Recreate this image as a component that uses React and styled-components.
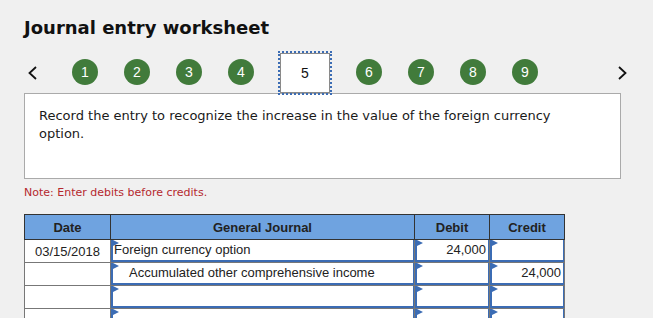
import React from "react";
import styled, { createGlobalStyle } from "styled-components";

const GlobalStyle = createGlobalStyle`
  html, body {
    margin: 0;
    padding: 0;
    background: #f0f0f0;
  }
  body {
    font-family: "DejaVu Sans", Verdana, sans-serif;
  }
`;

const Page = styled.div`
  padding: 17px 0 0 24px;
  width: 653px;
  height: 318px;
  box-sizing: border-box;
  overflow: hidden;
`;

const Title = styled.h1`
  margin: 0;
  font-size: 18px;
  line-height: 22px;
  font-weight: bold;
  color: #111;
`;

const Nav = styled.div`
  display: flex;
  align-items: center;
  height: 40px;
  margin-top: 14px;
`;

const Arrow = styled.button`
  display: flex;
  align-items: center;
  justify-content: center;
  width: 10px;
  height: 14px;
  padding: 0;
  border: none;
  background: none;
  margin: ${(p) => (p.$next ? "0 0 0 79px" : "0 34px 0 4px")};
`;

const Steps = styled.div`
  display: flex;
  align-items: center;
  gap: 26px;
`;

const Step = styled.div`
  width: 26px;
  height: 26px;
  border-radius: 50%;
  background: #417b3b;
  color: #fff;
  display: flex;
  align-items: center;
  justify-content: center;
  font-family: "Liberation Sans", Arial, sans-serif;
  font-size: 14px;
  margin-top: -2px;
`;

const CurrentStep = styled.div`
  position: relative;
  z-index: 1;
  width: 50px;
  height: 40px;
  box-sizing: border-box;
  background: #fff;
  border: 1px solid #8a8a8a;
  outline: 2px dotted #3b6cb4;
  outline-offset: 0;
  display: flex;
  align-items: center;
  justify-content: center;
  font-family: "Liberation Sans", Arial, sans-serif;
  font-size: 14px;
  color: #111;
`;

const Panel = styled.div`
  width: 597px;
  height: 86px;
  box-sizing: border-box;
  background: #fff;
  border: 1px solid #aaa;
  padding: 13px 50px 13px 14px;
  font-size: 13px;
  line-height: 18px;
  color: #1a1a1a;
`;

const Note = styled.div`
  margin-top: 7px;
  font-size: 11px;
  line-height: 14px;
  color: #b5282e;
`;

const Table = styled.table`
  margin: 14px 0 0 0;
  border-collapse: collapse;
  table-layout: fixed;
  width: 541px;
  font-family: "Liberation Sans", Arial, sans-serif;
  font-size: 13px;
  color: #222;
`;

const Th = styled.th`
  background: #6fa3e0;
  border: 1px solid #333;
  height: 24px;
  padding: 0;
  font-weight: bold;
  text-align: center;
`;

const Td = styled.td`
  border: 1px solid #777;
  height: 22px;
  padding: 0;
  background: ${(p) => (p.$plain ? "#fff" : "transparent")};
  text-align: center;
`;

const Field = styled.div`
  position: relative;
  height: 22px;
  box-sizing: border-box;
  background: #fff;
  border: 1px solid #3b6cb4;
  border-left-width: 2px;
  border-bottom-width: 2px;
  border-top: none;
  line-height: 20px;
  text-align: ${(p) => (p.$num ? "right" : "left")};
  padding: ${(p) => (p.$num ? "0 2px 0 0" : p.$indent ? "0 0 0 16px" : "0 0 0 1px")};
  white-space: nowrap;
  overflow: hidden;

  &::before {
    content: "";
    position: absolute;
    left: 0;
    top: 0;
    border-top: 3px solid transparent;
    border-bottom: 3px solid transparent;
    border-left: 6px solid #3b6cb4;
  }
`;

function Chevron({ dir }) {
  const pts = dir === "left" ? "8,1 1.5,7 8,13" : "2,1 8.5,7 2,13";
  return (
    <svg width="10" height="14" viewBox="0 0 10 14">
      <polyline points={pts} fill="none" stroke="#111" strokeWidth="1.8" />
    </svg>
  );
}

const rows = [
  { date: "03/15/2018", account: "Foreign currency option", debit: "24,000", credit: "" },
  { date: "", account: "Accumulated other comprehensive income", indent: true, debit: "", credit: "24,000" },
  { date: "", account: "", debit: "", credit: "" },
  { date: "", account: "", debit: "", credit: "" },
];

export default function App() {
  return (
    <Page>
      <GlobalStyle />
      <Title>Journal entry worksheet</Title>
      <Nav>
        <Arrow>
          <Chevron dir="left" />
        </Arrow>
        <Steps>
          {[1, 2, 3, 4].map((n) => (
            <Step key={n}>{n}</Step>
          ))}
          <CurrentStep>5</CurrentStep>
          {[6, 7, 8, 9].map((n) => (
            <Step key={n}>{n}</Step>
          ))}
        </Steps>
        <Arrow $next>
          <Chevron dir="right" />
        </Arrow>
      </Nav>
      <Panel>
        Record the entry to recognize the increase in the value of the foreign currency option.
      </Panel>
      <Note>Note: Enter debits before credits.</Note>
      <Table>
        <colgroup>
          <col style={{ width: 86 }} />
          <col style={{ width: 304 }} />
          <col style={{ width: 75 }} />
          <col style={{ width: 75 }} />
        </colgroup>
        <thead>
          <tr>
            <Th>Date</Th>
            <Th>General Journal</Th>
            <Th>Debit</Th>
            <Th>Credit</Th>
          </tr>
        </thead>
        <tbody>
          {rows.map((r, i) => (
            <tr key={i}>
              <Td $plain>{r.date}</Td>
              <Td>
                <Field $indent={r.indent}>{r.account}</Field>
              </Td>
              <Td>
                <Field $num>{r.debit}</Field>
              </Td>
              <Td>
                <Field $num>{r.credit}</Field>
              </Td>
            </tr>
          ))}
        </tbody>
      </Table>
    </Page>
  );
}
